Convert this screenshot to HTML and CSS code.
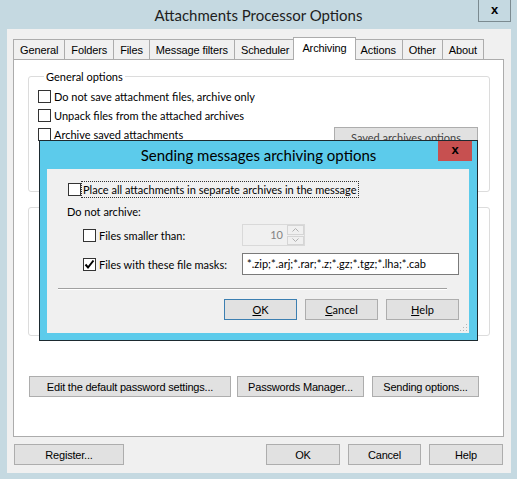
FILE: index.html
```html
<!DOCTYPE html>
<html lang="en">
<head>
    <meta charset="UTF-8">
    <meta name="viewport" content="width=device-width, initial-scale=1.0">
    <title>Attachments Processor Options</title>
    <link rel="stylesheet" href="styles.css">
</head>
<body>
    <div class="window">
        <div class="titlebar">
            <span class="title">Attachments Processor Options</span>
            <div class="win-close">x</div>
        </div>
        <div class="client">
            <div class="tabs">
                <div class="tab">General</div>
                <div class="tab">Folders</div>
                <div class="tab">Files</div>
                <div class="tab">Message filters</div>
                <div class="tab">Scheduler</div>
                <div class="tab active">Archiving</div>
                <div class="tab">Actions</div>
                <div class="tab">Other</div>
                <div class="tab last">About</div>
            </div>
            <div class="panel">
                <fieldset class="group group-general">
                    <legend>General options</legend>
                    <div class="row"><span class="check"></span>Do not save attachment files, archive only</div>
                    <div class="row"><span class="check"></span>Unpack files from the attached archives</div>
                    <div class="row">
                        <span class="check"></span>Archive saved attachments
                        <button class="btn btn-saved">Saved archives options</button>
                    </div>
                </fieldset>
                <fieldset class="group group-second"></fieldset>
                <div class="panel-actions">
                    <button class="btn btn-classic btn-edit">Edit the default password settings...</button>
                    <button class="btn btn-classic btn-manager">Passwords Manager...</button>
                    <button class="btn btn-classic btn-sending">Sending options...</button>
                </div>
            </div>
            <div class="footer">
                <button class="btn btn-classic btn-register">Register...</button>
                <div class="spacer"></div>
                <button class="btn btn-classic btn-ok">OK</button>
                <button class="btn btn-classic btn-cancel">Cancel</button>
                <button class="btn btn-classic btn-help">Help</button>
            </div>
        </div>

        <!-- modal dialog on top of the options window -->
        <div class="dialog">
            <div class="dlg-title">
                Sending messages archiving options
                <div class="dlg-close">x</div>
            </div>
            <div class="dlg-client">
                <div class="dlg-row">
                    <span class="check"></span><span class="focus">Place all attachments in separate archives in the message</span>
                </div>
                <div class="dlg-label">Do not archive:</div>
                <div class="opt-row opt-spin">
                    <div class="opt-label"><span class="check"></span>Files smaller than:</div>
                    <div class="spin">
                        <span class="spin-val">10</span>
                        <div class="spin-btns">
                            <span class="spin-btn">
                                <svg width="7" height="4" viewBox="0 0 7 4"><path d="M0.5 3.5 L3.5 0.5 L6.5 3.5" fill="none" stroke="#b0b0b0" stroke-width="1"/></svg>
                            </span>
                            <span class="spin-btn">
                                <svg width="7" height="4" viewBox="0 0 7 4"><path d="M0.5 0.5 L3.5 3.5 L6.5 0.5" fill="none" stroke="#b0b0b0" stroke-width="1"/></svg>
                            </span>
                        </div>
                    </div>
                </div>
                <div class="opt-row opt-mask">
                    <div class="opt-label">
                        <span class="check checked">
                            <svg width="11" height="11" viewBox="0 0 11 11"><path d="M1.5 5.5 L4 8.5 L9.5 1.5" fill="none" stroke="#000" stroke-width="2"/></svg>
                        </span>Files with these file masks:
                    </div>
                    <div class="mask-input">*.zip;*.arj;*.rar;*.z;*.gz;*.tgz;*.lha;*.cab</div>
                </div>
                <div class="separator"></div>
                <div class="dlg-buttons">
                    <button class="btn dlg-btn default"><u>O</u>K</button>
                    <button class="btn dlg-btn"><u>C</u>ancel</button>
                    <button class="btn dlg-btn"><u>H</u>elp</button>
                </div>
                <svg class="grip" width="10" height="10" viewBox="0 0 10 10">
                    <rect x="8" y="2" width="1" height="1" fill="#b5b5b5"/>
                    <rect x="5" y="5" width="1" height="1" fill="#b5b5b5"/>
                    <rect x="8" y="5" width="1" height="1" fill="#b5b5b5"/>
                    <rect x="2" y="8" width="1" height="1" fill="#b5b5b5"/>
                    <rect x="5" y="8" width="1" height="1" fill="#b5b5b5"/>
                    <rect x="8" y="8" width="1" height="1" fill="#b5b5b5"/>
                </svg>
            </div>
        </div>
    </div>
</body>
</html>
```

FILE: styles.css
```css
* {
    box-sizing: border-box;
}
body {
    margin: 0;
    padding: 0;
    background-color: #c5d9e1;
    font-family: Lato, "Liberation Sans", sans-serif;
    font-size: 11px;
    color: #000;
    width: 517px;
    height: 479px;
    overflow: hidden;
}
.window {
    position: relative;
    width: 517px;
    height: 479px;
}
.titlebar {
    height: 29px;
    display: flex;
    align-items: center;
    justify-content: center;
}
.title {
    font-size: 15px;
    color: #1e1e1e;
}
.win-close {
    position: absolute;
    top: 0;
    left: 478px;
    width: 33px;
    height: 22px;
    border: 1px solid #7b8a90;
    border-top: none;
    font-family: "Liberation Sans", sans-serif;
    font-weight: bold;
    font-size: 13px;
    display: flex;
    align-items: center;
    justify-content: center;
    padding-bottom: 3px;
}
.client {
    margin-left: 7px;
    width: 504px;
    height: 444px;
    background-color: #f0f0f0;
    padding: 8px 8px 0 6px;
}
.tabs {
    display: flex;
    height: 22px;
    font-family: "Liberation Sans", sans-serif;
    font-size: 11px;
    letter-spacing: -0.12px;
}
.tab {
    margin-top: 2px;
    height: 20px;
    padding: 0 6px;
    border: 1px solid #acacac;
    border-right: none;
    border-bottom: none;
    background-color: #f0f0f0;
    display: flex;
    align-items: center;
}
.tab.last {
    border-right: 1px solid #acacac;
}
.tab.active {
    margin: 0 -1px 0 -2px;
    height: 23px;
    padding: 0 8px 2px 8px;
    background-color: #fff;
    border-right: 1px solid #acacac;
    position: relative;
    z-index: 1;
}
.tab.active + .tab {
    border-left: none;
}
.panel {
    width: 491px;
    height: 378px;
    background-color: #fff;
    border: 1px solid #acacac;
    padding: 9px 13px 0 14px;
}
.group {
    margin: 0;
    padding: 3px 0 0 9px;
    border: 1px solid #dcdcdc;
    border-radius: 3px;
}
.group legend {
    padding: 0 2px;
    margin-left: 6px;
    line-height: 15px;
}
.group-general {
    height: 123px;
}
.group-second {
    margin-top: 15px;
    height: 129px;
}
.row {
    height: 19px;
    display: flex;
    align-items: center;
}
.check {
    width: 13px;
    height: 13px;
    border: 1px solid #333;
    background-color: #fff;
    margin-right: 3px;
    flex-shrink: 0;
    display: flex;
    align-items: center;
    justify-content: center;
}
.btn {
    font-family: Lato, "Liberation Sans", sans-serif;
    font-size: 11px;
    color: #000;
    background-color: #e1e1e1;
    border: 1px solid #adadad;
    padding: 0;
    height: 21px;
}
.btn-classic {
    font-family: "Liberation Sans", sans-serif;
    font-size: 11px;
    letter-spacing: -0.2px;
}
.btn-saved {
    margin-left: auto;
    margin-right: 11px;
    margin-top: 6px;
    width: 144px;
    color: #444;
}
.panel-actions {
    display: flex;
    margin-top: 40px;
    margin-left: 1px;
}
.btn-edit {
    width: 202px;
}
.btn-manager {
    width: 127px;
    margin-left: 6px;
}
.btn-sending {
    width: 107px;
    margin-left: 8px;
}
.footer {
    display: flex;
    margin-top: 7px;
    padding-left: 1px;
}
.spacer {
    flex: 1;
}
.btn-register {
    width: 110px;
}
.btn-ok {
    width: 74px;
}
.btn-cancel {
    width: 73px;
    margin-left: 8px;
}
.btn-help {
    width: 74px;
    margin-left: 8px;
}
.dialog {
    position: absolute;
    left: 39px;
    top: 140px;
    width: 439px;
    height: 201px;
    background-color: #5ccbeb;
    border: 1px solid #1d2a30;
    padding: 0 8px 7px 7px;
    display: flex;
    flex-direction: column;
}
.dlg-title {
    height: 28px;
    flex-shrink: 0;
    display: flex;
    align-items: center;
    justify-content: center;
    font-size: 15px;
    color: #000;
    position: relative;
    padding-left: 1px;
}
.dlg-close {
    position: absolute;
    top: 0;
    right: -3px;
    width: 34px;
    height: 20px;
    background-color: #c75050;
    font-family: "Liberation Sans", sans-serif;
    font-weight: bold;
    font-size: 13px;
    color: #000;
    display: flex;
    align-items: center;
    justify-content: center;
    padding-bottom: 3px;
}
.dlg-client {
    flex: 1;
    background-color: #f0f0f0;
    padding: 12px 10px 0 21px;
    position: relative;
}
.dlg-row {
    height: 16px;
    display: flex;
    align-items: center;
}
.dlg-row .check {
    margin-right: 1px;
}
.focus {
    outline: 1px dotted #333;
    padding: 0 1px;
    line-height: 15px;
}
.dlg-label {
    margin-top: 7px;
    margin-left: -1px;
    height: 16px;
    line-height: 16px;
}
.opt-row {
    display: flex;
    align-items: center;
    margin-left: 15px;
    height: 22px;
}
.opt-spin {
    margin-top: 4px;
}
.opt-mask {
    margin-top: 7px;
}
.opt-label {
    width: 159px;
    display: flex;
    align-items: center;
}
.spin {
    width: 63px;
    height: 22px;
    border: 1px solid #d9d9d9;
    background-color: #f0f0f0;
    display: flex;
}
.spin-val {
    flex: 1;
    text-align: right;
    color: #838383;
    padding-right: 4px;
    line-height: 20px;
}
.spin-btns {
    width: 17px;
    display: flex;
    flex-direction: column;
    gap: 1px;
}
.spin-btn {
    flex: 1;
    border: 1px solid #d5d5d5;
    background-color: #f0f0f0;
    display: flex;
    align-items: center;
    justify-content: center;
}
.mask-input {
    width: 217px;
    height: 22px;
    border: 1px solid #7a7a7a;
    background-color: #fff;
    padding-left: 4px;
    line-height: 20px;
    white-space: nowrap;
    overflow: hidden;
}
.separator {
    margin: 13px 12px 0 -10px;
    border-top: 1px solid #a0a0a0;
    border-bottom: 1px solid #fff;
}
.dlg-buttons {
    display: flex;
    justify-content: flex-end;
    gap: 8px;
    margin-top: 9px;
}
.dlg-btn {
    width: 73px;
}
.dlg-btn.default {
    border-color: #3c7fb1;
}
.grip {
    position: absolute;
    right: 1px;
    bottom: 1px;
}
```
